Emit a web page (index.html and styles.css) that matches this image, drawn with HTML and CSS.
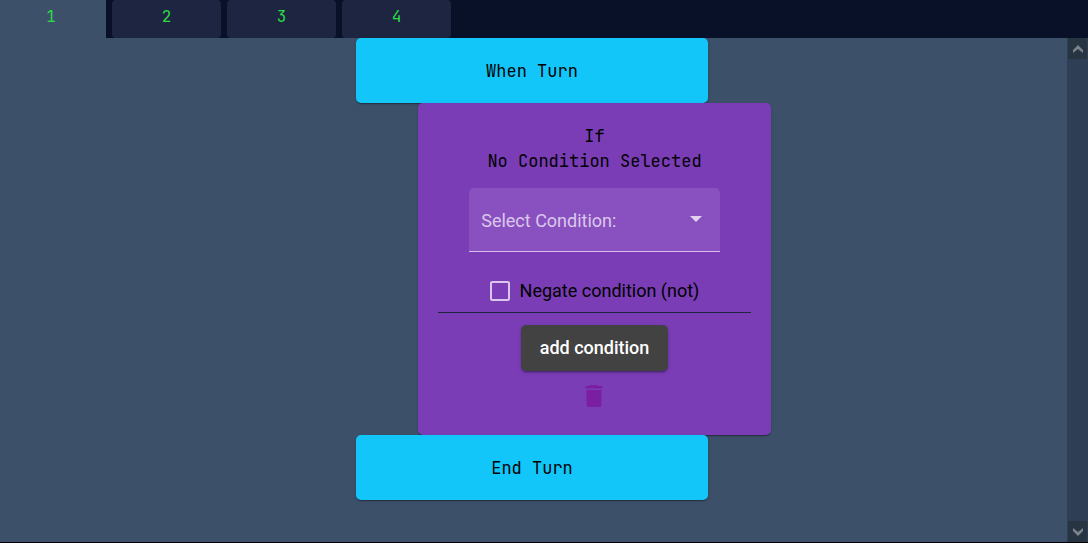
FILE: index.html
```html
<!DOCTYPE html>
<html lang="en">
<head>
<meta charset="utf-8">
<meta name="viewport" content="width=device-width, initial-scale=1">
<title>Turn rules</title>
<link rel="stylesheet" href="styles.css">
</head>
<body>
<div class="app">
  <nav class="tabs" role="tablist" aria-label="Rules">
    <button class="tab tab-active" type="button" role="tab" aria-selected="true">1</button>
    <button class="tab" type="button" role="tab" aria-selected="false">2</button>
    <button class="tab" type="button" role="tab" aria-selected="false">3</button>
    <button class="tab" type="button" role="tab" aria-selected="false">4</button>
  </nav>
  <div class="workspace">
    <main class="canvas">
      <section class="card card-event">When Turn</section>
      <section class="card card-if">
        <div class="if-title">If</div>
        <div class="if-title">No Condition Selected</div>
        <div class="field">
          <select class="field-select" aria-label="Select Condition:">
            <option>Select Condition:</option>
          </select>
          <svg class="field-arrow" viewBox="0 0 12 6" aria-hidden="true"><path d="M0 0h12L6 6z"/></svg>
        </div>
        <label class="negate"><input class="negate-box" type="checkbox">Negate condition (not)</label>
        <hr class="divider">
        <button class="add" type="button">add condition</button>
        <button class="remove" type="button" aria-label="Delete">
          <svg class="remove-icon" viewBox="0 0 18 22" aria-hidden="true"><path d="M5 0h7l1 1h4.500v2.500H.5V1H4z M1.500 5h15v15a2 2 0 0 1-2 2h-11a2 2 0 0 1-2-2z"/></svg>
        </button>
      </section>
      <section class="card card-event">End Turn</section>
    </main>
    <div class="scrollbar">
      <button class="scroll-button" type="button" aria-label="Scroll up">
        <svg class="scroll-icon" viewBox="0 0 10 8" aria-hidden="true"><path d="M5 0l5 5v3L5 4 0 8V5z"/></svg>
      </button>
      <button class="scroll-button" type="button" aria-label="Scroll down">
        <svg class="scroll-icon" viewBox="0 0 10 8" aria-hidden="true"><path d="M5 8l5-5V0L5 4 0 0v3z"/></svg>
      </button>
    </div>
  </div>
</div>
</body>
</html>
```
FILE: styles.css
```css
* {
  box-sizing: border-box;
}

body {
  margin: 0;
  background: #3c506a;
  font-family: Roboto, sans-serif;
  font-size: 18px;
  color: #000;
}

button,
select {
  font: inherit;
}

.app {
  display: flex;
  flex-direction: column;
  min-height: 100vh;
  border-bottom: 1px solid #000;
}

.tabs {
  display: flex;
  gap: 6px;
  height: 38px;
  background: #091129;
}

.tab {
  width: 109px;
  padding: 0 0 5px;
  border: 0;
  border-radius: 4px;
  background: #1d2541;
  color: #2bdc46;
  font-family: "JetBrains Mono", "DejaVu Sans Mono", monospace;
  font-size: 16px;
}

.tab-active {
  width: 106px;
  padding-right: 4px;
  border-radius: 0;
  background: #3c506a;
}

.workspace {
  display: flex;
  flex: 1;
}

.canvas {
  display: flex;
  flex: 1;
  flex-direction: column;
  align-items: center;
  padding: 0 3px 42px 0;
}

.card {
  width: 33%;
  padding: 21px 20px 19px;
  border-radius: 5px;
  box-shadow: 0 2px 1px -1px rgba(0, 0, 0, 0.2), 0 1px 1px rgba(0, 0, 0, 0.14), 0 1px 3px rgba(0, 0, 0, 0.12);
  font-family: "JetBrains Mono", "DejaVu Sans Mono", monospace;
  font-size: 17px;
  line-height: 25px;
  text-align: center;
}

.card-event {
  background: #12c6fa;
}

.card-if {
  display: flex;
  flex-direction: column;
  align-items: center;
  width: 33.2%;
  margin-left: 125px;
  background: #7a3db6;
}

.if-title {
  white-space: nowrap;
}

.field {
  position: relative;
  width: 80%;
  margin-top: 14px;
}

.field-select {
  display: block;
  width: 100%;
  height: 64px;
  padding: 1px 12px 0;
  border: 0;
  border-bottom: 1px solid #d6bfea;
  border-radius: 5px 5px 0 0;
  appearance: none;
  background: #8950bf;
  color: #dac8eb;
  font-family: Roboto, sans-serif;
  font-size: 18px;
}

.field-arrow {
  position: absolute;
  top: 28px;
  right: 18px;
  width: 12px;
  height: 6px;
  fill: #e1d1ef;
  pointer-events: none;
}

.negate {
  display: flex;
  align-items: center;
  gap: 10px;
  margin-top: 26px;
  font-family: Roboto, sans-serif;
  font-size: 18px;
  white-space: nowrap;
}

.negate-box {
  width: 20px;
  height: 20px;
  margin: 0;
  border: 2px solid #dac5ec;
  border-radius: 2px;
  appearance: none;
}

.negate-box:checked {
  background: #dac5ec;
}

.divider {
  width: 100%;
  margin: 9px 0 12px;
  border: 0;
  border-top: 1px solid #1d2541;
}

.add {
  height: 46px;
  padding: 0 19px 2px;
  border: 0;
  border-radius: 5px;
  background: #424242;
  box-shadow: 0 3px 1px -2px rgba(0, 0, 0, 0.2), 0 2px 2px rgba(0, 0, 0, 0.14), 0 1px 5px rgba(0, 0, 0, 0.12);
  color: #fff;
  font-family: Roboto, sans-serif;
  font-size: 18px;
  font-weight: 500;
}

.remove {
  display: flex;
  align-items: center;
  justify-content: center;
  width: 40px;
  height: 40px;
  margin-top: 5px;
  padding: 0;
  border: 0;
  background: none;
}

.remove-icon {
  width: 18px;
  height: 22px;
  fill: #7b1fa2;
}

.scrollbar {
  display: flex;
  flex-direction: column;
  justify-content: space-between;
  width: 21px;
  padding: 0 1px;
  background: #2e3e54;
}

.scroll-button {
  display: flex;
  align-items: center;
  justify-content: center;
  height: 21px;
  padding: 0;
  border: 0;
  background: #273442;
}

.scroll-icon {
  width: 10px;
  height: 8px;
  fill: #7b838c;
}
```
